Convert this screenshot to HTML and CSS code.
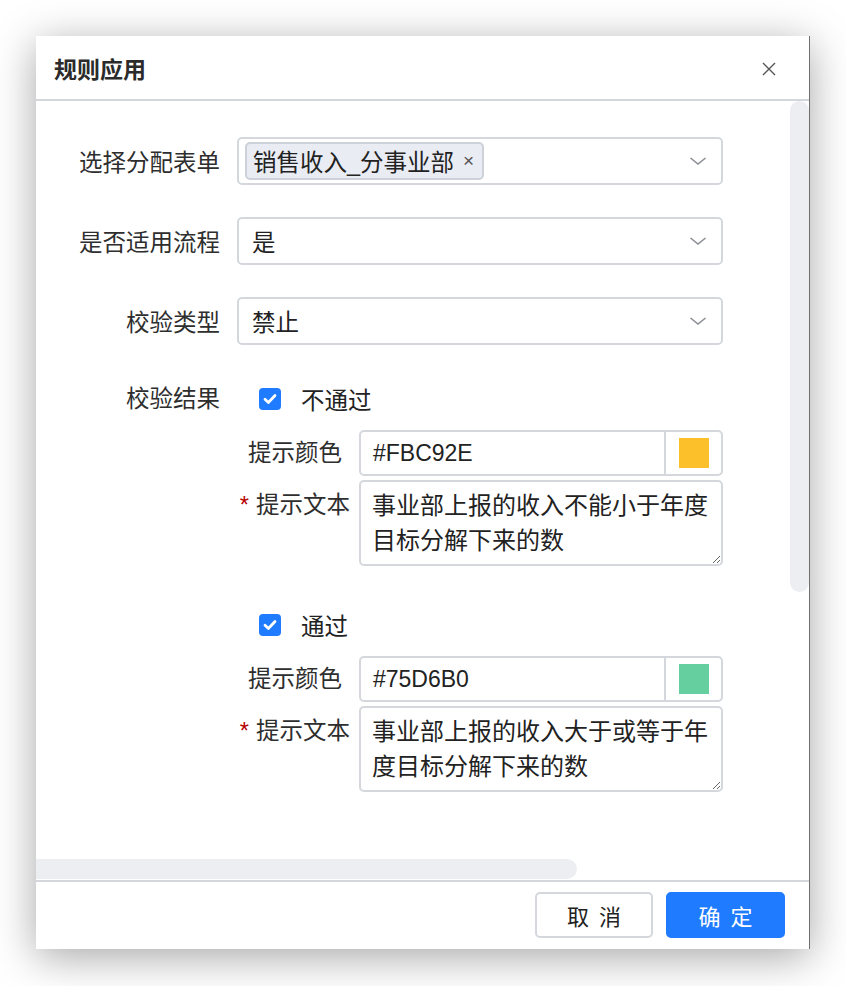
FILE: index.html
```html
<!DOCTYPE html>
<html lang="zh-CN">
<head>
<meta charset="UTF-8" />
<title>规则应用</title>
<link rel="stylesheet" href="styles.css">
</head>
<body>

<div class="dialog">
  <!-- HEADER -->
  <div class="dialog-header">
    <h3>规则应用</h3>
    <span class="dialog-close">
      <svg width="14" height="14" viewBox="0 0 14 14"><path d="M1 1L13 13M13 1L1 13" stroke="#555" stroke-width="1.4" fill="none"/></svg>
    </span>
  </div>

  <!-- BODY -->
  <div class="dialog-body">
    <div class="form">
      <div class="form-row">
        <label class="form-label">选择分配表单</label>
        <div class="select">
          <span class="tag">销售收入_分事业部<span class="tag-close">×</span></span>
          <svg class="chevron" width="18" height="10" viewBox="0 0 18 10"><path d="M1.5 2L9 8L16.5 2" stroke="#8a8d93" stroke-width="1.6" fill="none"/></svg>
        </div>
      </div>

      <div class="form-row">
        <label class="form-label">是否适用流程</label>
        <div class="select">
          <span class="select-value">是</span>
          <svg class="chevron" width="18" height="10" viewBox="0 0 18 10"><path d="M1.5 2L9 8L16.5 2" stroke="#8a8d93" stroke-width="1.6" fill="none"/></svg>
        </div>
      </div>

      <div class="form-row">
        <label class="form-label">校验类型</label>
        <div class="select">
          <span class="select-value">禁止</span>
          <svg class="chevron" width="18" height="10" viewBox="0 0 18 10"><path d="M1.5 2L9 8L16.5 2" stroke="#8a8d93" stroke-width="1.6" fill="none"/></svg>
        </div>
      </div>

      <div class="form-row result-row">
        <label class="form-label">校验结果</label>
        <div class="result-block">
          <!-- 不通过 -->
          <label class="checkbox">
            <span class="check-box"><svg width="14" height="12" viewBox="0 0 14 12"><path d="M2 6.2L5.4 9.4L12 2.6" stroke="#fff" stroke-width="2.8" fill="none" stroke-linecap="round" stroke-linejoin="round"/></svg></span>
            不通过
          </label>
          <div class="sub-row">
            <label class="sub-label">提示颜色</label>
            <div class="color-input">
              <span class="color-text">#FBC92E</span>
              <span class="color-pick"><span class="swatch swatch-yellow"></span></span>
            </div>
          </div>
          <div class="sub-row">
            <label class="sub-label required"><span class="star">*</span>提示文本</label>
            <textarea class="text-input">事业部上报的收入不能小于年度目标分解下来的数</textarea>
          </div>

          <!-- 通过 -->
          <label class="checkbox checkbox-second">
            <span class="check-box"><svg width="14" height="12" viewBox="0 0 14 12"><path d="M2 6.2L5.4 9.4L12 2.6" stroke="#fff" stroke-width="2.8" fill="none" stroke-linecap="round" stroke-linejoin="round"/></svg></span>
            通过
          </label>
          <div class="sub-row">
            <label class="sub-label">提示颜色</label>
            <div class="color-input">
              <span class="color-text">#75D6B0</span>
              <span class="color-pick"><span class="swatch swatch-green"></span></span>
            </div>
          </div>
          <div class="sub-row">
            <label class="sub-label required"><span class="star">*</span>提示文本</label>
            <textarea class="text-input">事业部上报的收入大于或等于年度目标分解下来的数</textarea>
          </div>
        </div>
      </div>
    </div>

    <div class="scroll-y"></div>
    <div class="scroll-x"></div>
  </div>

  <!-- FOOTER -->
  <div class="dialog-footer">
    <button class="btn">取消</button>
    <button class="btn btn-primary">确定</button>
  </div>
</div>

</body>
</html>
```

FILE: styles.css
```css
html {
  background: #fff;
}
body {
  margin: 0;
  min-height: 986px;
  box-sizing: border-box;
  padding: 36px 0 0 36px;
  font-family: "Liberation Sans", "Noto Sans CJK SC", sans-serif;
  color: #333;
}
/* DIALOG */
.dialog {
  width: 774px;
  height: 913px;
  box-sizing: border-box;
  background: #fff;
  border-right: 1px solid #6f6f6f;
  box-shadow: 0 8px 40px rgba(0, 0, 0, 0.35);
  display: flex;
  flex-direction: column;
}
.dialog-header {
  height: 65px;
  box-sizing: border-box;
  border-bottom: 2px solid #d3d7dc;
  display: flex;
  align-items: center;
  justify-content: space-between;
  padding: 0 33px 0 18px;
}
.dialog-header h3 {
  margin: 0;
  font-size: 23px;
  font-weight: 700;
  color: #2b2b2b;
}
.dialog-close {
  display: flex;
  margin-top: 2px;
}
.dialog-body {
  flex: 1;
  position: relative;
  overflow: hidden;
  padding-top: 36px;
}
/* FORM */
.form-row {
  display: grid;
  grid-template-columns: 184px 486px;
  column-gap: 17px;
  align-items: center;
  margin-bottom: 32px;
}
.form-label {
  text-align: right;
  font-size: 23.5px;
  color: #2e2e2e;
}
.select {
  height: 48px;
  box-sizing: border-box;
  border: 2px solid #d4d7dc;
  border-radius: 5px;
  display: flex;
  align-items: center;
  padding: 0 14px 0 6px;
}
.select-value {
  flex: 1;
  padding-left: 7px;
  font-size: 23.5px;
  color: #222;
}
.chevron {
  margin-left: auto;
}
.tag {
  height: 38px;
  box-sizing: border-box;
  background: #e9ecf3;
  border: 2px solid #cdd1d9;
  border-radius: 5px;
  display: flex;
  align-items: center;
  padding: 0 8px 0 6px;
  font-size: 23.5px;
  color: #222;
}
.tag-close {
  margin-left: 9px;
  font-size: 19px;
  color: #555;
}
.result-row {
  align-items: start;
  margin-top: 39px;
}
.result-row .form-label {
  line-height: 30px;
}
.checkbox {
  display: flex;
  align-items: center;
  height: 30px;
  padding-left: 22px;
  font-size: 23.5px;
  color: #222;
}
.check-box {
  width: 22px;
  height: 22px;
  border-radius: 4px;
  background: #1f7bff;
  display: flex;
  align-items: center;
  justify-content: center;
  margin-right: 20px;
}
.checkbox-second {
  margin-top: 44px;
}
.sub-row {
  display: grid;
  grid-template-columns: 122px 364px;
  align-items: start;
  margin-top: 4px;
}
.checkbox + .sub-row {
  margin-top: 16px;
}
.sub-label {
  text-align: right;
  padding-right: 17px;
  font-size: 23.5px;
  line-height: 46px;
  color: #2e2e2e;
}
.sub-label.required {
  padding-right: 9px;
  line-height: 35px;
  padding-top: 8px;
}
.star {
  color: #b80000;
  margin-right: 7px;
}
.color-input {
  height: 46px;
  box-sizing: border-box;
  border: 2px solid #d4d7dc;
  border-radius: 5px;
  display: flex;
}
.color-text {
  flex: 1;
  display: flex;
  align-items: center;
  padding-left: 12px;
  font-size: 23px;
  color: #222;
}
.color-pick {
  width: 55px;
  border-left: 2px solid #d4d7dc;
  display: flex;
  align-items: center;
  justify-content: center;
}
.swatch {
  width: 30px;
  height: 30px;
}
.swatch-yellow { background: #fbc02a; }
.swatch-green { background: #66cf9f; }
.text-input {
  width: 364px;
  height: 86px;
  box-sizing: border-box;
  border: 2px solid #d4d7dc;
  border-radius: 5px;
  padding: 6px 11px;
  margin: 0;
  font-family: "Liberation Sans", "Noto Sans CJK SC", sans-serif;
  font-size: 24px;
  line-height: 35px;
  color: #222;
  outline: none;
  overflow: hidden;
}
/* SCROLLBARS */
.scroll-y {
  position: absolute;
  top: 0;
  right: 0;
  width: 19px;
  height: 491px;
  border-radius: 10px;
  background: #edeef2;
}
.scroll-x {
  position: absolute;
  left: 0;
  bottom: 1px;
  width: 541px;
  height: 20px;
  border-radius: 0 10px 10px 0;
  background: #edeef2;
}
/* FOOTER */
.dialog-footer {
  height: 69px;
  box-sizing: border-box;
  border-top: 2px solid #d4d7dc;
  display: flex;
  justify-content: flex-end;
  gap: 13px;
  padding: 10px 24px 0 0;
}
.btn {
  width: 118px;
  height: 46px;
  border: 2px solid #d4d7dc;
  border-radius: 5px;
  background: #fff;
  color: #222;
  font-family: "Liberation Sans", "Noto Sans CJK SC", sans-serif;
  font-size: 22px;
  letter-spacing: 10px;
  padding: 0 0 0 10px;
  cursor: pointer;
}
.btn-primary {
  width: 119px;
  background: #1f7bff;
  border-color: #1f7bff;
  color: #fff;
}
```
